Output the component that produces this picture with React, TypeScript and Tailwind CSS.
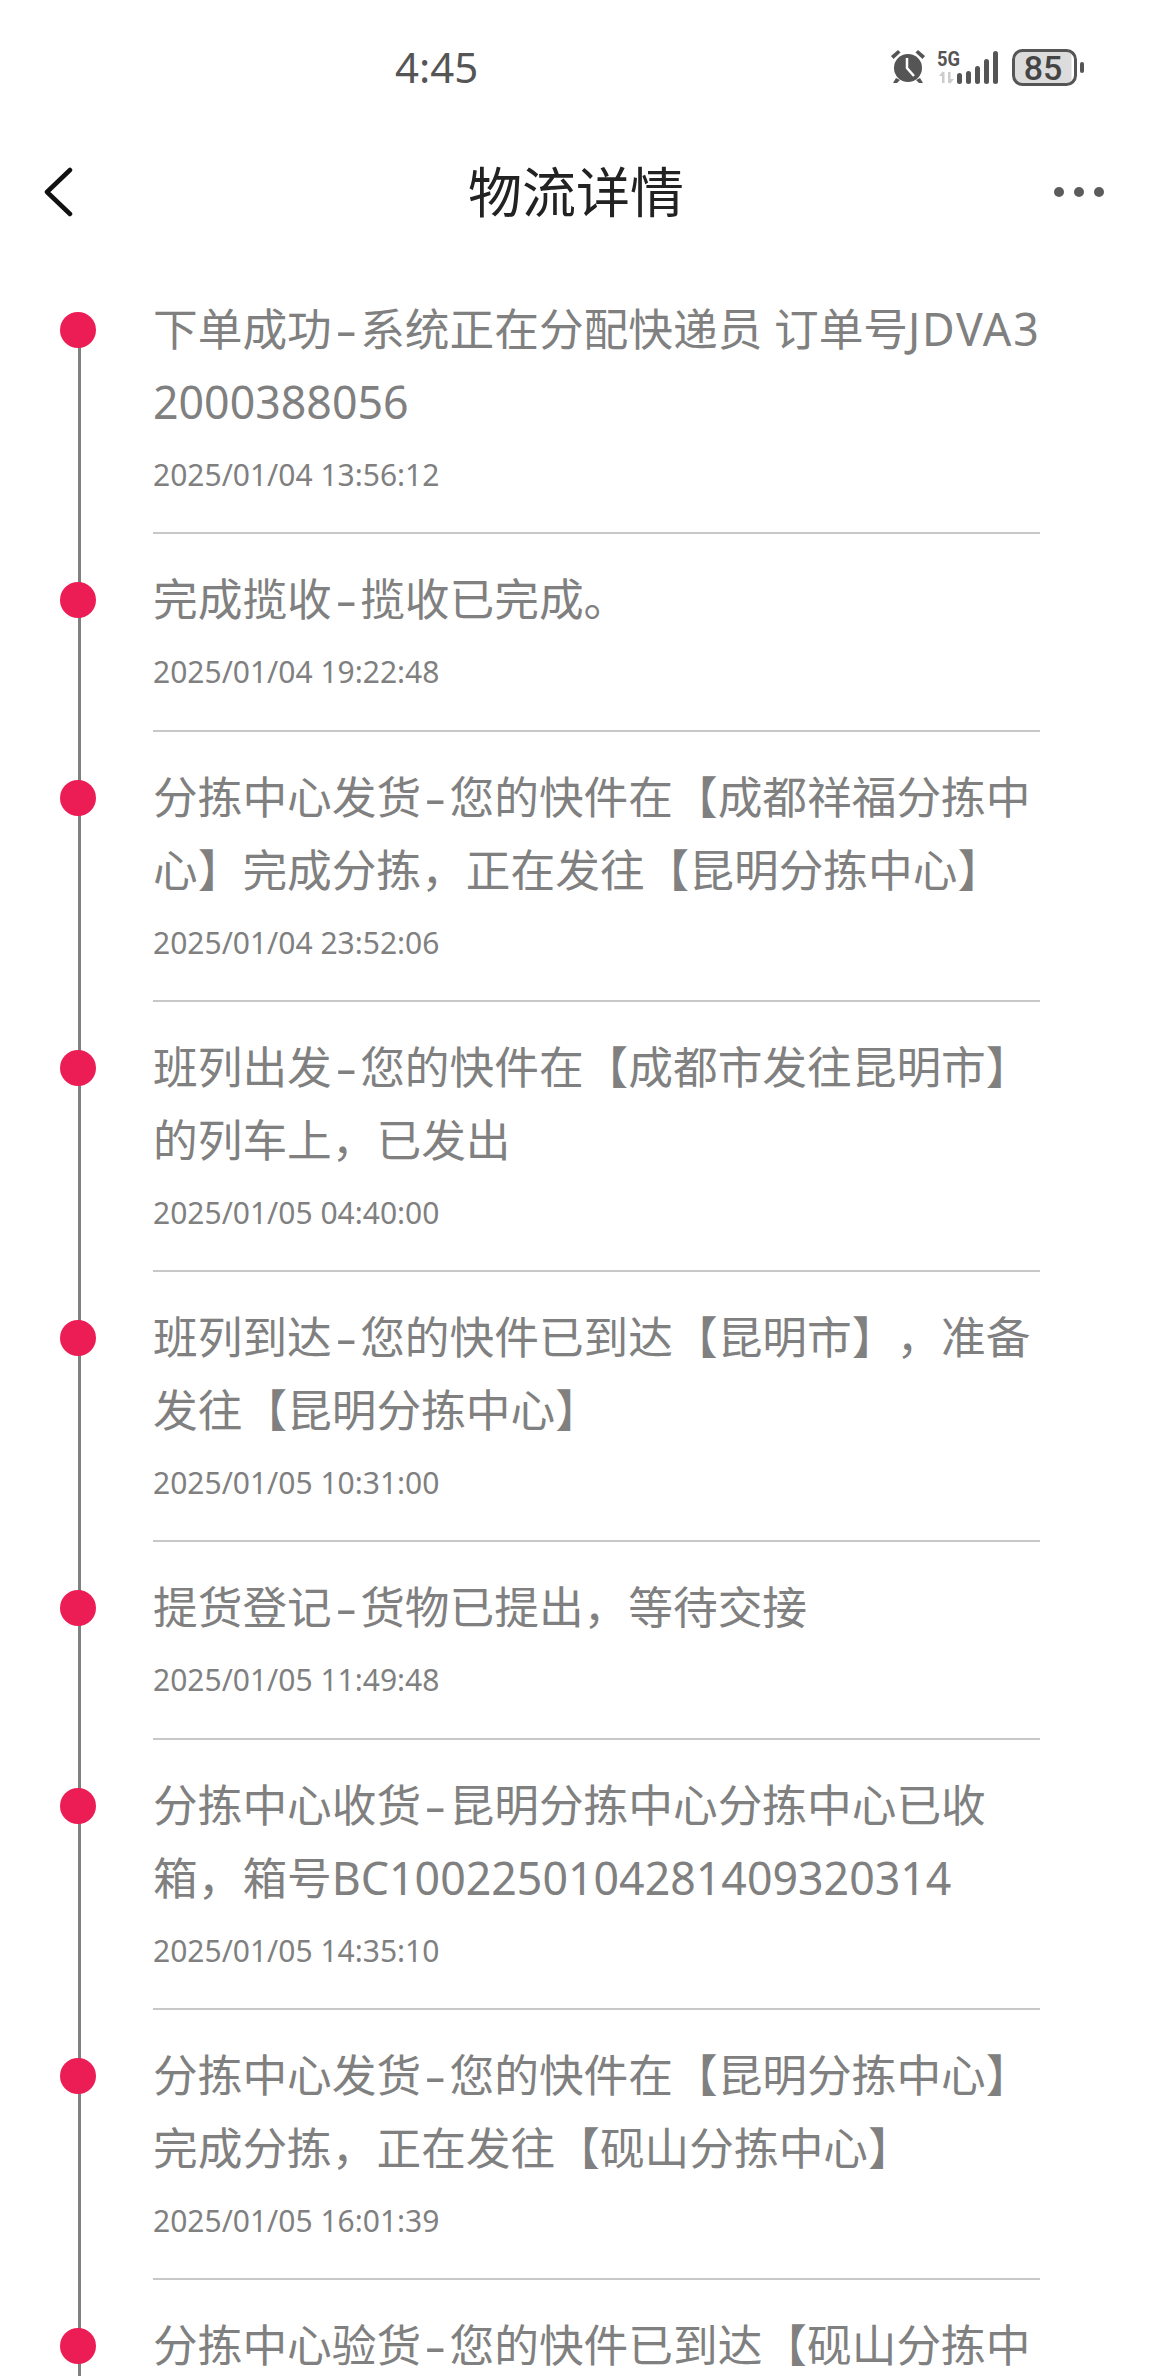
const rows: { lines: string[]; time?: string }[] = [
  { lines: ["下单成功-系统正在分配快递员 订单号JDVA3", "2000388056"], time: "2025/01/04 13:56:12" },
  { lines: ["完成揽收-揽收已完成。"], time: "2025/01/04 19:22:48" },
  { lines: ["分拣中心发货-您的快件在【成都祥福分拣中", "心】完成分拣，正在发往【昆明分拣中心】"], time: "2025/01/04 23:52:06" },
  { lines: ["班列出发-您的快件在【成都市发往昆明市】", "的列车上，已发出"], time: "2025/01/05 04:40:00" },
  { lines: ["班列到达-您的快件已到达【昆明市】，准备", "发往【昆明分拣中心】"], time: "2025/01/05 10:31:00" },
  { lines: ["提货登记-货物已提出，等待交接"], time: "2025/01/05 11:49:48" },
  { lines: ["分拣中心收货-昆明分拣中心分拣中心已收", "箱，箱号BC1002250104281409320314"], time: "2025/01/05 14:35:10" },
  { lines: ["分拣中心发货-您的快件在【昆明分拣中心】", "完成分拣，正在发往【砚山分拣中心】"], time: "2025/01/05 16:01:39" },
  { lines: ["分拣中心验货-您的快件已到达【砚山分拣中"] },
];

function StatusIcons() {
  return (
    <svg width="196" height="40" viewBox="0 0 196 40" className="block overflow-visible">
      <g fill="#555">
        <circle cx="18" cy="21" r="14" />
        <path d="M1 9 L8 3 L10.500 5.500 L3.500 12 Z" />
        <path d="M35 9 L28 3 L25.500 5.500 L32.500 12 Z" />
        <path d="M6 31 L3 36 L7 36 L10 33 Z" />
        <path d="M30 31 L33 36 L29 36 L26 33 Z" />
      </g>
      <path d="M17 11 L17 21 L24 29" fill="none" stroke="#fff" strokeWidth="2.500" />
      <text x="47" y="19" fontSize="20" fontWeight="700" fill="#555" fontFamily="Roboto, sans-serif" textLength="23" lengthAdjust="spacingAndGlyphs">5G</text>
      <g fill="#ccc">
        <rect x="52" y="25" width="2.500" height="11" />
        <rect x="58" y="25" width="2.500" height="11" />
        <path d="M49 29 L53 24 L53 29 Z" />
        <path d="M64 32 L60 37 L60 32 Z" />
      </g>
      <g fill="#555">
        <rect x="67" y="26" width="5" height="11" rx="2.500" />
        <rect x="76" y="24" width="5" height="13" rx="2.500" />
        <rect x="85" y="19" width="5" height="18" rx="2.500" />
        <rect x="94" y="12" width="5" height="25" rx="2.500" />
        <rect x="103" y="4" width="5" height="33" rx="2.500" />
      </g>
      <path d="M130 5 H181.500 V36 H130 Q125 36 125 31 V10 Q125 5 130 5 Z" fill="#dcdcdc" />
      <rect x="123.500" y="3.500" width="62" height="34" rx="9" fill="none" stroke="#555" strokeWidth="3" />
      <rect x="190" y="15" width="4" height="11" rx="2" fill="#555" />
      <text x="153" y="33" fontSize="34" fontWeight="500" fill="#444" fontFamily="Roboto, sans-serif" textAnchor="middle">85</text>
    </svg>
  );
}

function Line({ text }: { text: string }) {
  const i = text.indexOf("-");
  if (i < 0) return <div className="h-[73px]">{text}</div>;
  const rest = text.slice(i + 1);
  const j = rest.indexOf("JDVA3");
  return (
    <div className="h-[73px]">
      {text.slice(0, i)}
      <span className="mx-[7px] inline-block scale-x-150">-</span>
      {j < 0 ? (
        rest
      ) : (
        <>
          {rest.slice(0, j)}
          <span className="tracking-[1.8px]">JDVA3</span>
        </>
      )}
    </div>
  );
}

function Row({ lines, time, first }: { lines: string[]; time?: string; first: boolean }) {
  return (
    <li className="relative pl-[153px] pr-[112px] pt-[28px]">
      <span className={first ? "absolute left-[78px] top-[66px] bottom-0 w-[3px] bg-[#808080]" : "absolute left-[78px] top-0 bottom-0 w-[3px] bg-[#808080]"} />
      <span className="absolute left-[60px] top-[48px] size-9 rounded-full bg-[#ec1c54]" />
      <div className="text-[44.7px] leading-[73px] whitespace-nowrap text-[#808080] [text-spacing-trim:space-all]">
        {lines.map((l) => (
          <Line key={l} text={l} />
        ))}
      </div>
      {time && (
        <>
          <div className="mt-[17px] h-10 text-[30px] leading-10 text-[#808080]">{time}</div>
          <div className="mt-[37.25px] h-[2px] bg-[#c8c8c8]" />
        </>
      )}
    </li>
  );
}

export default function App() {
  return (
    <div className="h-[2376px] w-[1152px] overflow-hidden bg-white font-['Noto_Sans','Noto_Sans_CJK_SC',sans-serif]">
      <div className="flex h-[135px] items-start pt-[47px] pl-[395px] pr-[66px]">
        <span className="text-[42px] leading-10 font-normal text-[#555]">4:45</span>
        <span className="ml-auto">
          <StatusIcons />
        </span>
      </div>
      <header className="flex h-[114px] items-center pl-[44px] pr-[48px]">
        <span className="w-[54px] shrink-0">
          <svg width="30" height="50" viewBox="0 0 30 50" className="block">
            <path d="M26 3 L3 25 L26 47" fill="none" stroke="#111" strokeWidth="4.500" strokeLinecap="round" strokeLinejoin="round" />
          </svg>
        </span>
        <h1 className="flex-1 text-center text-[54px] leading-[70px] font-normal text-[#222]">物流详情</h1>
        <span className="flex w-[50px] shrink-0 justify-between">
          <i className="size-[10px] rounded-full bg-[#5c5c5c]" />
          <i className="size-[10px] rounded-full bg-[#5c5c5c]" />
          <i className="size-[10px] rounded-full bg-[#5c5c5c]" />
        </span>
      </header>
      <ul className="flex flex-col pt-[15px]">
        {rows.map((r, i) => (
          <Row key={r.lines[0]} lines={r.lines} time={r.time} first={i === 0} />
        ))}
      </ul>
    </div>
  );
}
